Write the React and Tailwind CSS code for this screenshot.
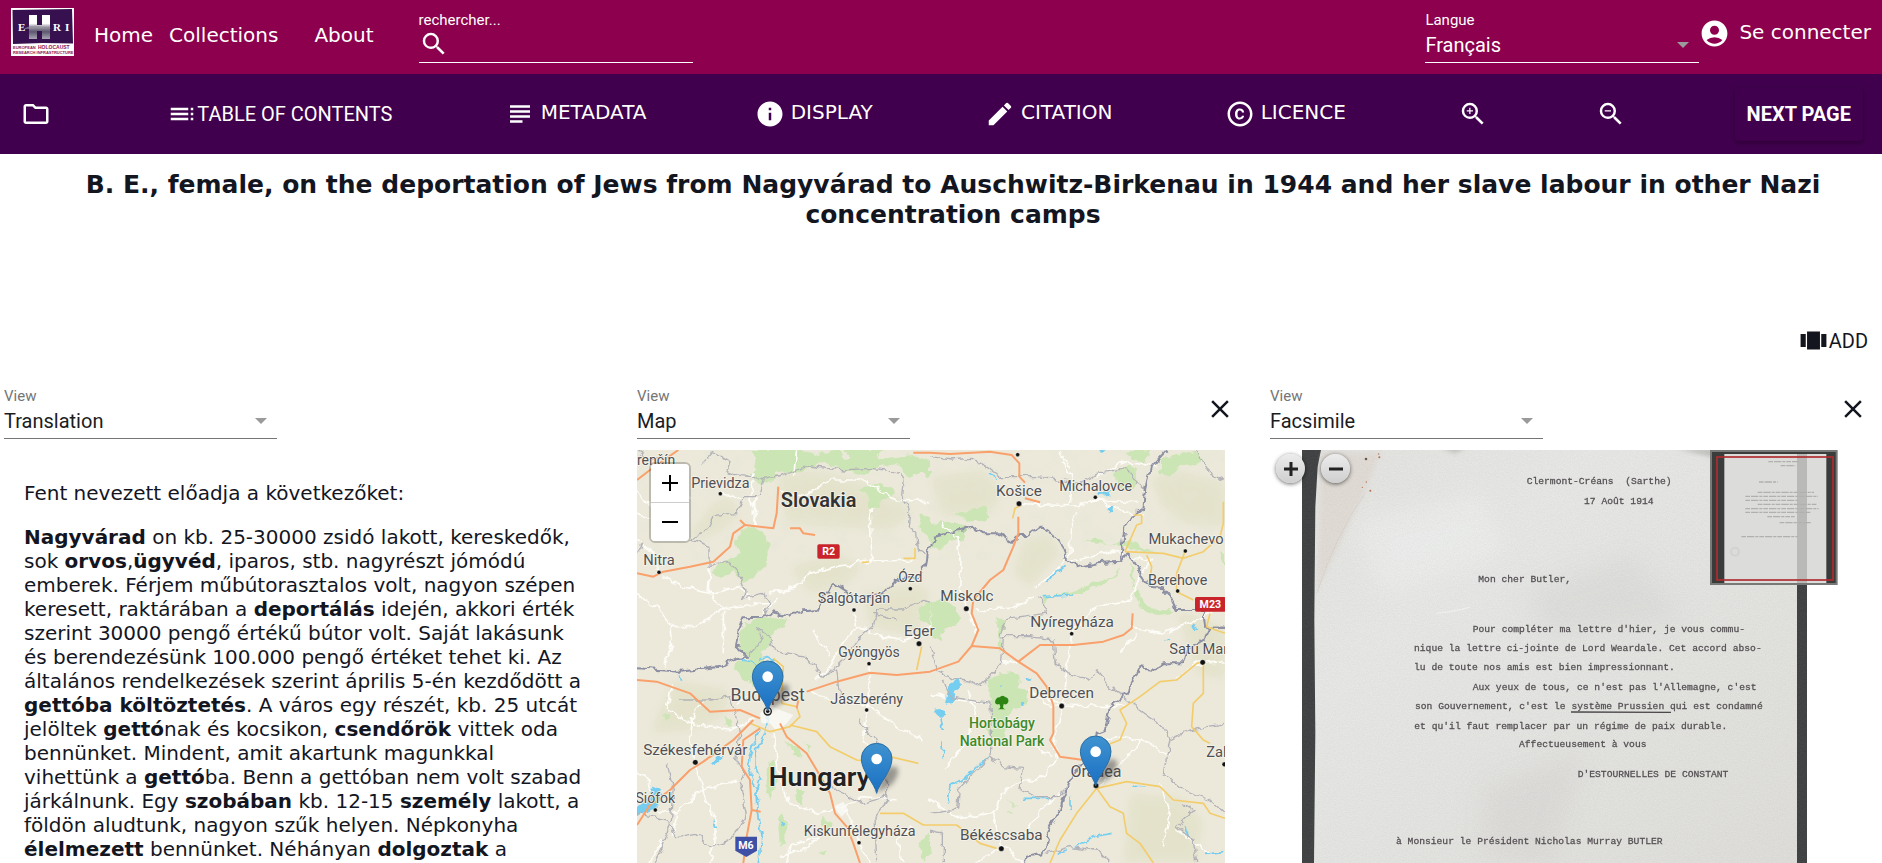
import React from "react";
import {
  MdAccountCircle,
  MdClose,
  MdCopyright,
  MdEdit,
  MdInfo,
  MdOutlineFolder,
  MdSearch,
  MdSubject,
  MdToc,
  MdViewCarousel,
  MdZoomIn,
  MdZoomOut,
} from "react-icons/md";

function Logo() {
  return (
    <svg viewBox="0 0 63 48" className="h-12 w-[63px]" role="img" aria-label="EHRI">
      <defs>
        <linearGradient id="hfade" x1="0" y1="0" x2="0" y2="1">
          <stop offset="0.35" stopColor="#fff" />
          <stop offset="0.5" stopColor="#9a96a4" />
          <stop offset="0.7" stopColor="#5d5870" />
          <stop offset="1" stopColor="#aaa6b4" />
        </linearGradient>
      </defs>
      <rect width="63" height="48" fill="#fff" />
      <path d="M1.500 2 L61 1 L62 35.500 L32 35 L2 36 Z" fill="#37104f" />
      <path d="M18 7 H26 V17 H31 V7 H39 V31 H31 V23 H26 V31 H18 Z" fill="url(#hfade)" />
      <path d="M14 20 Q22 16 31 19 T45 19 L45 20 L14 21 Z" fill="#9a96a4" opacity="0.6" />
      <g fill="#fff" fontFamily="'Liberation Serif', serif" fontSize="11" fontWeight="bold">
        <text x="7" y="23">E</text>
        <text x="42" y="23">R</text>
        <text x="54" y="23">I</text>
      </g>
      <g fill="#8e1450" fontFamily="'Liberation Sans', sans-serif" fontWeight="bold">
        <text x="2" y="41" fontSize="4">EUROPEAN</text>
        <text x="27" y="41" fontSize="5">HOLOCAUST</text>
        <text x="2" y="46" fontSize="4">RESEARCH INFRASTRUCTURE</text>
      </g>
    </svg>
  );
}

function Dropdown({ id, label, options, light }) {
  return (
    <div className={light ? "relative w-[274px] border-b border-white text-white" : "relative w-[273px] border-b border-[#757575] text-[#1c1c1f]"}>
      <label htmlFor={id} className={light ? "block text-[15px] leading-5" : "block text-[15px] leading-5 text-[#757575]"}>
        {label}
      </label>
      <select id={id} className="block h-8 w-full appearance-none bg-transparent pb-[3px] text-[20px] leading-6 outline-none">
        {options.map((o) => (
          <option key={o} className="text-black">{o}</option>
        ))}
      </select>
      <svg viewBox="0 0 12 6" className="pointer-events-none absolute right-2.5 bottom-3.5 h-1.5 w-3" aria-hidden="true">
        <path d="M0 0 H12 L6 6 Z" fill="#9a9a9a" />
      </svg>
    </div>
  );
}

function Header() {
  return (
    <header className="flex h-[74px] shrink-0 items-start bg-[#8c004d] pr-[11px] pl-[11px] text-[20px] leading-6 text-white">
      <a href="#ehri" className="mt-2 block"><Logo /></a>
      <nav className="mt-[23px] ml-5 flex">
        <a href="#home">Home</a>
        <a href="#collections" className="ml-4">Collections</a>
        <a href="#about" className="ml-9">About</a>
      </nav>
      <div className="mt-2.5 ml-[45px] w-[274px] border-b border-white font-[Roboto,sans-serif]">
        <label htmlFor="search" className="block text-[15px] leading-5">rechercher...</label>
        <div className="flex h-8 items-center pb-1">
          <MdSearch className="size-[30px] shrink-0" />
          <input id="search" type="text" className="min-w-0 flex-1 bg-transparent outline-none" />
        </div>
      </div>
      <div className="mt-2.5 ml-auto font-[Roboto,sans-serif]">
        <Dropdown id="lang" label="Langue" options={["Français", "English"]} light />
      </div>
      <a href="#login" className="mt-[18px] flex items-center">
        <MdAccountCircle className="size-[31px]" />
        <span className="-mt-1 ml-[9px]">Se connecter</span>
      </a>
    </header>
  );
}

function Toolbar() {
  return (
    <nav className="flex h-20 shrink-0 items-center justify-between bg-[#40004d] pr-[19px] pl-[21px] text-[20px] leading-6 text-white">
      <button aria-label="Folder" className="mr-2"><MdOutlineFolder className="size-[30px]" /></button>
      <button className="mr-1 flex items-center font-[Roboto,sans-serif]">
        <MdToc className="size-[30px]" />TABLE OF CONTENTS
      </button>
      <button className="flex items-center gap-1.5">
        <MdSubject className="size-[30px]" /><span className="-mt-1">METADATA</span>
      </button>
      <button className="flex items-center gap-1.5">
        <MdInfo className="size-[30px]" /><span className="-mt-1">DISPLAY</span>
      </button>
      <button className="mx-1 flex items-center gap-1.5">
        <MdEdit className="size-[30px]" /><span className="-mt-1">CITATION</span>
      </button>
      <button className="mr-1 flex items-center gap-1.5">
        <MdCopyright className="size-[30px]" /><span className="-mt-1">LICENCE</span>
      </button>
      <button aria-label="Zoom in"><MdZoomIn className="size-[30px]" /></button>
      <button aria-label="Zoom out"><MdZoomOut className="size-[30px]" /></button>
      <button className="h-[53px] rounded-sm px-3 font-[Roboto,sans-serif] font-bold shadow-[0_2px_4px_rgba(0,0,0,0.3)]">
        NEXT PAGE
      </button>
    </nav>
  );
}

function Panel({ id, view, closable, children }) {
  return (
    <section className="flex min-w-0 flex-1 flex-col">
      <div className="mb-[11px] flex items-start justify-between font-[Roboto,sans-serif]">
        <Dropdown id={id} label="View" options={[view, "Transcription", "Metadata"]} />
        {closable && (
          <button aria-label="Close" className="mt-2 -mr-2.5 text-[#13161f]">
            <MdClose className="size-[30px]" />
          </button>
        )}
      </div>
      <div className="min-h-0 flex-1 overflow-hidden">{children}</div>
    </section>
  );
}

function Translation() {
  return (
    <div className="space-y-5 pt-[31px] pl-5 text-[20px] leading-6">
      <p>Fent nevezett előadja a következőket:</p>
      <p>
        <b>Nagyvárad</b> on kb. 25-30000 zsidó lakott, kereskedők, sok <b>orvos</b>,<b>ügyvéd</b>, iparos, stb.
        nagyrészt jómódú emberek. Férjem műbútorasztalos volt, nagyon szépen keresett, raktárában a{" "}
        <b>deportálás</b> idején, akkori érték szerint 30000 pengő értékű bútor volt. Saját lakásunk és
        berendezésünk 100.000 pengő értéket tehet ki. Az általános rendelkezések szerint április 5-én
        kezdődött a <b>gettóba költöztetés</b>. A város egy részét, kb. 25 utcát jelöltek <b>gettó</b>nak és
        kocsikon, <b>csendőrök</b> vittek oda bennünket. Mindent, amit akartunk magunkkal vihettünk a{" "}
        <b>gettó</b>ba. Benn a gettóban nem volt szabad járkálnunk. Egy <b>szobában</b> kb. 12-15{" "}
        <b>személy</b> lakott, a földön aludtunk, nagyon szűk helyen. Népkonyha <b>élelmezett</b> bennünket.
        Néhányan <b>dolgoztak</b> a
      </p>
    </div>
  );
}

const forests = [
  "M365 210 L380 265 L365 285 L385 315 L430 300 L440 275 L500 280 L540 260 L580 245 L640 270 L700 285 L740 260 L800 250 L830 290 L870 275 L900 290 L900 240 L850 225 L760 235 L700 215 L650 240 L620 210 L560 225 L500 210 Z",
  "M640 210 L670 245 L740 230 L760 210 Z",
  "M684 330 L720 312 L770 318 L796 335 L740 380 L716 384 L712 350 Z",
  "M865 400 L900 410 L900 480 L875 455 Z",
  "M330 455 L368 440 L410 470 L418 500 L405 560 L360 600 L340 608 L310 575 L280 588 L245 580 L262 552 L300 535 L330 520 L315 490 Z",
  "M345 730 L380 715 L440 712 L470 720 L462 742 L430 750 L420 800 L395 815 L400 850 L372 920 L345 900 L315 865 L318 842 L360 838 L328 800 L330 765 Z",
  "M870 680 L900 665 L900 740 L865 715 Z",
  "M95 1005 L118 1002 L112 1018 Z M283 1010 L302 1020 L305 1045 L290 1035 Z",
  "M465 1080 L500 1100 L515 1130 L490 1125 Z M523 1090 L545 1100 L540 1118 Z",
  "M410 1150 L435 1145 L440 1200 L420 1260 L410 1220 Z",
  "M455 1300 L470 1320 L465 1390 L450 1400 L445 1340 Z M500 1225 L520 1235 L515 1270 L498 1260 Z M580 1310 L605 1330 L600 1355 L570 1330 Z",
  "M865 1400 L895 1350 L905 1420 L880 1440 Z M565 1425 L590 1400 L585 1420 Z",
  "M880 430 L960 425 L1005 440 L1005 490 L960 480 L930 510 L900 500 Z",
  "M975 400 L1040 390 L1070 383 L1075 420 L1010 425 Z",
  "M900 670 L940 655 L980 690 L985 730 L940 750 L935 785 L905 765 Z",
  "M1095 710 L1130 725 L1125 750 L1110 770 L1120 800 L1105 812 L1110 760 Z",
  "M1070 900 L1110 880 L1170 875 L1172 900 L1165 925 L1195 930 L1190 975 L1150 985 L1135 1010 L1125 1070 L1095 1080 L1080 1000 L1085 960 L1078 930 Z",
  "M1450 280 L1500 255 L1520 270 L1522 310 L1490 335 L1462 318 Z",
  "M1485 215 L1560 210 L1545 250 L1510 235 Z",
  "M1590 235 L1700 215 L1725 240 L1685 260 L1660 255 L1620 290 L1590 280 Z",
  "M1360 485 L1400 475 L1440 495 L1500 480 L1580 520 L1560 518 L1480 500 L1420 490 Z",
  "M1235 650 L1300 640 L1340 630 L1400 605 L1440 595 L1470 560 L1450 595 L1400 620 L1340 645 L1260 650 L1240 680 Z",
  "M1500 545 L1515 570 L1510 610 L1530 640 L1535 670 L1590 690 L1620 680 L1630 700 L1580 705 L1530 690 L1510 625 Z",
  "M1060 1040 L1100 1050 L1090 1070 Z M1130 1255 L1165 1285 L1150 1280 Z M1130 1290 L1150 1300 L1140 1305 Z",
  "M1775 510 L1785 520 L1785 560 L1772 540 Z",
];

const relief = [
  "M440 290 Q560 250 700 310 T800 340 L850 400 L780 450 L600 440 L470 430 Z",
  "M250 370 L300 350 L330 400 L280 450 L200 480 L180 460 Z",
  "M480 560 L620 520 L700 560 L640 620 L540 640 Z",
  "M900 290 L1060 270 L1120 330 L1080 400 L940 410 Z",
  "M1180 480 L1260 460 L1290 520 L1200 620 L1150 580 Z",
  "M1560 300 L1640 270 L1785 310 L1785 440 L1660 430 L1600 380 Z",
  "M700 640 L860 610 L900 640 L860 770 L720 740 Z",
  "M1500 1240 L1650 1250 L1720 1320 L1700 1449 L1480 1449 Z",
  "M1640 690 L1785 740 L1785 900 L1700 880 Z",
  "M130 900 L300 930 L280 1010 L180 1050 L60 1060 Z",
];

const whiteRoads = [
  "M21 640 L90 690 L120 740 L200 740 L270 690 L350 675 L420 670 L400 700 L440 660",
  "M100 590 L160 620 L240 640 L330 620 L360 660 M120 740 L125 800 L100 860",
  "M240 550 L235 630 L280 690 L280 820 M375 350 L372 430 M372 280 L360 360 L380 390 L375 430",
  "M720 384 L725 530 L720 545 M450 330 L520 350 L600 300 L700 300 L800 360 L900 365 M500 210 L490 290",
  "M420 640 L500 620 L540 580 L620 560 L700 545 L850 540 M672 700 L680 740 L640 790 L600 860 L560 900",
  "M680 740 L760 770 L830 780 L900 740 M717 855 L720 880 M550 750 L600 830",
  "M130 910 L110 980 L180 1030 L300 1050 L370 1020 M196 1150 L180 1080 L190 1000 L220 960",
  "M76 1290 L140 1300 L200 1240 L320 1200 M196 1150 L220 1240 L260 1330 L240 1449",
  "M430 1060 L440 1160 L480 1270 L560 1300 L640 1280 L700 1250 L800 1260 M640 1280 L670 1330 L687 1388 L720 1449",
  "M450 1430 L520 1410 L580 1360 M470 1449 L480 1400 L560 1370 M820 1449 L800 1380 L850 1340",
  "M540 930 L600 960 L720 980 L800 1040 L880 1080 M720 890 L710 990 L700 1080 L740 1130",
  "M935 430 L980 470 L990 540 L990 620 L1010 680 L1040 760 M1040 690 L1160 680 L1210 650",
  "M1168 370 L1260 375 L1340 378 L1400 360 L1520 365 M1340 400 L1325 440 L1320 520 L1280 570 L1220 620",
  "M1300 245 L1330 300 L1320 370 M1396 352 L1440 380 L1500 400 L1540 405 M1325 260 L1290 220 M1400 290 L1480 245 L1580 260",
  "M1570 530 L1530 590 L1500 660 L1400 680 L1325 760 M1325 540 L1440 515 L1560 540",
  "M1170 845 L1110 850 M1325 765 L1310 860 L1305 950 L1290 1010 L1270 1080 L1280 1140",
  "M1195 930 L1300 975 L1440 980 L1500 970 M1200 930 L1240 970 L1295 980",
  "M1500 740 L1600 760 L1720 710 L1760 690 M1470 820 L1520 760 M1640 900 L1690 850 L1800 845",
  "M1400 1080 L1480 1070 L1560 1090 L1620 1130 M1410 1215 L1500 1120 L1540 1080 M1280 1140 L1240 1190 L1130 1220 L1090 1300 L980 1310 L900 1260",
  "M1090 1300 L1110 1390 L1180 1449 M1114 1405 L1030 1449 M1320 1220 L1240 1280 L1180 1370 M940 1170 L1000 1100 L1040 1000 L1010 930",
  "M900 940 L980 960 L1080 970 M1180 1080 L1270 1130 M1590 1210 L1620 1300 L1600 1400 M1640 1350 L1740 1420",
  "M21 400 L80 420 L180 350 M271 341 L340 360 M60 380 L21 330 M21 480 L70 520 L87 575",
  "M21 1180 L60 1200 L76 1290 M100 1380 L60 1449 M140 1300 L130 1370 M320 970 L380 930 L400 850",
];

const borders = [
  "M21 865 L150 875 L270 860 L315 835 L350 830 L318 795 L325 750 L340 712 L400 710 L430 700 L480 710 L500 695 L560 690 L580 650 L615 612 L660 640 L700 650 L760 640 L800 600 L860 590 L885 560 L890 520 L915 470 L1030 440 L1060 460 L1110 460 L1148 485 L1170 465 L1195 465 L1232 440 L1290 480 L1310 530 L1340 562 L1400 550 L1470 545 L1475 500 L1485 430 L1540 385 L1545 330 L1560 265 L1610 210",
  "M1470 545 L1490 520 L1510 535 L1530 580 L1560 620 L1600 625 L1620 650 L1640 690 L1720 690 L1725 740 L1785 740",
  "M1785 740 L1740 740 L1720 780 L1670 810 L1660 850 L1600 850 L1570 870 L1530 865 L1490 940 L1440 980 L1425 1050 L1400 1060 L1395 1110 L1350 1160 L1315 1210 L1290 1290 L1250 1360 L1260 1380 L1240 1420 L1190 1430 L1185 1449",
];

const regions = [
  "M21 215 L60 240 L110 230 M220 250 L250 215 L300 245 L290 275 L330 290 L400 295 L460 285 L540 255 L640 270 L720 265 L770 270 L820 290 L815 350 L840 390 L835 440 L860 460 L865 510 L885 520",
  "M400 295 L385 350 L340 350 L320 400 L250 410 L230 450 L180 480 L240 500 L240 560 L290 540 L320 570 L345 630 L335 655 L400 640 L420 670 L400 710",
  "M900 230 L960 240 L1020 235 L1070 260 L1110 290 L1220 290 L1280 300 L1350 310 L1400 280 L1490 265 L1520 310 L1545 330",
  "M350 830 L400 780 L380 740 L420 770 L430 810 L530 830 L580 890 L620 870 L630 960",
  "M580 890 L640 840 L680 780 L730 740 L740 690 L820 690 L870 660 L900 670 M730 700 L800 720",
  "M900 800 L920 870 L970 895 L1010 900 L1050 915 L1080 890 L1115 850 L1120 770 L1200 770 L1270 780 L1275 850 L1310 880 L1380 900 L1400 870 L1440 920 L1470 940",
  "M940 900 L960 950 L1080 970 L1085 1080 L1080 1130 L1120 1160 L1180 1165 L1170 1230 L1220 1250 L1290 1250 L1315 1210",
  "M1080 1130 L1020 1190 L985 1230 L980 1290 L900 1300 M21 1300 L110 1320 L140 1370 L200 1360 L240 1400 L300 1380 L350 1310 L330 1210",
  "M150 960 L240 960 L300 950 L330 1050 L320 1140 L345 1180 L330 1220 M110 1150 L130 1230 L120 1330 L80 1449",
  "M680 1020 L740 1080 L770 1180 L770 1260 L735 1310 L740 1449 M560 1190 L620 1230 L700 1270 L770 1250",
  "M1470 940 L1530 990 L1600 1040 L1620 1080 L1680 1050 L1785 1030 M1620 1080 L1600 1180 L1660 1230 L1740 1260 L1785 1300",
  "M1250 1420 L1320 1400 L1400 1410 L1440 1449 M1660 1270 L1690 1290 L1640 1340 L1690 1380 L1700 1449 M1700 210 L1740 280 L1785 305",
  "M1225 650 L1250 700 L1130 715 L1115 770 M900 1350 L940 1360 L940 1449 M21 520 L40 490",
];

const yellowRoads = [
  "M480 1035 L560 1055 L600 1100 L680 1140 L770 1150 L780 1130 L865 1150",
  "M360 1030 L420 1055 L480 1040 L510 1010 L500 980 L455 970 L460 860 L430 835",
  "M750 1300 L820 1300 L880 1335 L980 1335 L1050 1390 L1100 1405",
  "M875 800 L860 870 M820 535 L855 535 L855 505 M695 547 L718 546",
  "M1148 415 L1155 385 L1175 375 M1485 515 L1520 435 L1535 430 L1535 405 L1510 405 M1485 515 L1600 520 L1660 535 L1720 515 L1770 470 L1780 430 L1780 365",
  "M1550 525 L1565 560 L1560 600 M1665 515 L1640 580 L1640 635 L1690 660 M1740 700 L1730 740 L1785 760",
  "M1720 845 L1700 850 L1640 900 L1590 905 L1530 950 L1470 990 L1490 1030 L1470 1080 L1430 1095",
  "M1720 845 L1720 940 L1690 970 L1685 1040 L1720 1080 L1740 1090",
  "M1400 1225 L1490 1205 L1590 1220 L1630 1260 L1720 1270 L1740 1300 L1785 1315",
  "M1400 1225 L1340 1300 L1290 1380 L1260 1449 M1400 1225 L1440 1280 L1480 1300 L1490 1360 L1530 1390 L1570 1449",
];

const orangeRoads = [
  "M21 580 L70 590 L100 575 L180 560 L250 545 L300 500 L310 460 L345 435 L430 445 L440 400 L445 320",
  "M345 435 L330 420 M480 445 L510 445 L520 460 L555 465 M21 300 L60 270 L145 210",
  "M21 900 L80 905 L180 940 L240 995 L330 990 L390 1015",
  "M370 1020 L310 1080 L220 1145 L180 1170 L120 1230 L60 1275 L21 1335",
  "M530 935 L620 905 L720 878 L800 885 L900 875 L985 845 L1025 798 L1110 805 L1165 845 L1220 880 L1250 920 L1270 975 L1270 1060 L1260 1080 L1290 1130 L1360 1140",
  "M500 985 L505 960 M450 1030 L470 1070 L530 1120 L560 1170 L600 1240 L615 1300 L650 1340 L670 1390 L690 1449",
  "M390 1045 L340 1080 L335 1160 L360 1200 L365 1290 L350 1370 L340 1449 M365 1290 L392 1295",
  "M1165 845 L1230 795 L1330 795 L1420 785 L1480 765 L1505 745 L1508 700",
  "M1025 798 L1045 750 L1025 700 L1030 660 L1080 600 L1120 570 L1150 500 L1165 460 L1165 410",
  "M900 218 L960 222 L1080 215 L1145 225 L1168 250 L1168 290 L1185 308 M850 218 L900 218 M1185 355 L1230 367",
];

const water = [
  "M21 1280 L60 1250 L70 1220 L110 1245 L75 1285 L21 1310 Z",
  "M945 970 L960 910 L985 895 L990 915 L965 970 L945 975 Z",
  "M915 990 L945 985 L945 1005 L925 1010 Z",
  "M1190 890 L1205 895 L1200 905 L1192 902 Z M1170 970 L1185 968 L1178 980 Z",
  "M240 1155 L260 1132 L282 1130 L262 1150 Z M250 1320 L265 1340 L255 1345 Z M148 885 L160 900 L152 903 Z",
  "M1435 385 L1450 378 L1448 395 L1438 398 Z M1400 340 L1450 330 L1440 345 L1405 348 Z M452 1320 L462 1330 L455 1340 Z",
  "M1109 915 L1120 912 L1115 922 Z M1410 210 L1425 215 L1418 222 Z",
];

const rivers = [
  "M415 1010 L405 1060 L380 1100 L378 1160 L395 1200 L378 1240 L382 1300 L395 1380 L385 1449",
  "M390 1050 L370 1090 L355 1160 L370 1210 L385 1230",
  "M320 830 L380 855 M388 835 L410 830 L430 845",
  "M1080 280 L1100 300 M1250 605 L1280 575 L1310 562 M1235 650 L1330 645",
  "M930 1000 L940 1050 M935 1080 L940 1140 M955 1265 L960 1215 L1000 1200 L1040 1160 L1080 1130",
  "M1185 1255 L1262 1255 M1320 1250 L1320 1290 M1280 1420 L1310 1410 M1330 1400 L1390 1370 L1450 1360",
  "M1510 1215 L1540 1218 M1660 1340 L1675 1370 M1725 1420 L1780 1412 M1610 780 L1620 785 M1690 730 L1700 750",
];

const cities = [
  [21, 255, "renčín", 42, "start"], [271, 323, "Prievidza", 43], [87, 556, "Nitra", 44], [841, 606, "Ózd", 42],
  [672, 670, "Salgótarján", 43], [868, 769, "Eger", 46], [717, 831, "Gyöngyös", 42], [413, 964, "Budapest", 53],
  [710, 971, "Jászberény", 43], [196, 1125, "Székesfehérvár", 46], [76, 1270, "Siófok", 42],
  [689, 1369, "Kiskunfélegyháza", 43], [1167, 347, "Košice", 46], [1397, 333, "Michalovce", 43],
  [1668, 491, "Mukachevo", 44], [1643, 614, "Berehove", 43], [1011, 664, "Miskolc", 46],
  [1326, 740, "Nyíregyháza", 46], [1618, 823, "Satu Mare", 44, "start"], [1295, 954, "Debrecen", 46],
  [1729, 1131, "Zalău", 44, "start"], [1398, 1190, "Oradea", 48], [1114, 1381, "Békéscsaba", 46],
];

const dots = [
  [271, 341, 6], [87, 577, 6], [841, 626, 6], [672, 690, 6], [867, 791, 8], [717, 851, 6], [710, 990, 6],
  [196, 1147, 8], [76, 1290, 6], [687, 1388, 6], [1163, 224, 6], [1167, 371, 8], [1396, 352, 6], [1666, 513, 6],
  [1643, 633, 6], [1009, 686, 8], [1325, 761, 6], [1718, 847, 8], [1295, 978, 8], [1783, 1153, 7], [1114, 1406, 8],
  [1398, 1217, 8],
];

const pins = [[413, 993], [740, 1240], [1397, 1218]];

function Lines({ items, stroke, width }) {
  return (
    <g fill="none" stroke={stroke} strokeWidth={width} strokeLinejoin="round">
      {items.map((d) => <path key={d} d={d} />)}
    </g>
  );
}

function MapView() {
  return (
    <div className="relative h-full bg-[#ebe9da]">
      <svg viewBox="21 210 1764 1239" preserveAspectRatio="xMinYMin slice" className="block h-full w-full" role="img" aria-label="Map">
        <defs>
          <linearGradient id="pin" x1="0" y1="0" x2="0" y2="1">
            <stop offset="0" stopColor="#3f93cf" />
            <stop offset="1" stopColor="#1a6fc4" />
          </linearGradient>
          <filter id="soft" x="-20%" y="-20%" width="140%" height="140%"><feGaussianBlur stdDeviation="14" /></filter>
          <filter id="shade" x="-50%" y="-50%" width="200%" height="200%"><feGaussianBlur stdDeviation="8" /></filter>
          <filter id="terrain" x="0" y="0" width="100%" height="100%">
            <feTurbulence type="fractalNoise" baseFrequency="0.02" numOctaves="3" seed="11" />
            <feColorMatrix values="0 0 0 0 0.78  0 0 0 0 0.79  0 0 0 0 0.66  1.600 0 0 0 -0.700" />
          </filter>
          <filter id="wobble" x="0" y="0" width="100%" height="100%">
            <feTurbulence type="fractalNoise" baseFrequency="0.04" numOctaves="2" seed="4" result="n" />
            <feDisplacementMap in="SourceGraphic" in2="n" scale="24" xChannelSelector="R" yChannelSelector="G" />
          </filter>
        </defs>
        <rect x="21" y="210" width="1764" height="1239" fill="#ece9db" />
        <g fill="#dfdfc2" opacity="0.6" filter="url(#soft)">{relief.map((d) => <path key={d} d={d} />)}</g>
        <rect x="21" y="210" width="1764" height="330" filter="url(#terrain)" opacity="0.7" />
        <g filter="url(#wobble)">
          <rect x="21" y="210" width="1764" height="1239" fill="none" />
          <g fill="#cce5b4">{forests.map((d) => <path key={d} d={d} />)}</g>
          <Lines items={whiteRoads} stroke="#fdfcf7" width="5" />
          <g fill="#75cdf0">{water.map((d) => <path key={d} d={d} />)}</g>
          <Lines items={rivers} stroke="#75cdf0" width="5" />
          <Lines items={regions} stroke="#b3b2b8" width="4" />
          <Lines items={borders} stroke="#8d8fa3" width="6" />
        </g>
        <path d="M390 1000 L420 975 L450 990 L490 1005 L470 1030 L440 1055 L420 1030 L395 1030 Z" fill="#fbfaf6" opacity="0.8" />
        <path d="M610 1280 L640 1265 L655 1290 L635 1310 Z" fill="#fbfaf6" opacity="0.8" />
        <Lines items={yellowRoads} stroke="#f3cd6c" width="5" />
        <Lines items={orangeRoads} stroke="#f9a06b" width="6" />
        <g fill="#111">
          {dots.map(([x, y, r]) => <circle key={x + "-" + y} cx={x} cy={y} r={r} stroke="#fff" strokeWidth="1" />)}
        </g>
        <circle cx="413" cy="994" r="11" fill="#ddd" stroke="#222" strokeWidth="4" />
        <circle cx="413" cy="994" r="5" fill="#111" />
        <g fontFamily="Roboto, sans-serif" fill="#505055" stroke="#f6f4ea" strokeWidth="5" strokeLinejoin="round" paintOrder="stroke">
          {cities.map(([x, y, t, s, a]) => (
            <text key={t} x={x} y={y} fontSize={s} textAnchor={a || "middle"}>{t}</text>
          ))}
          <text x="566" y="380" fontSize="60" fontWeight="600" fill="#333" textAnchor="middle">Slovakia</text>
          <text x="568" y="1218" fontSize="80" fontWeight="600" fill="#222" textAnchor="middle">Hungary</text>
          <g fill="#3c8a2c" fontWeight="500" fontSize="42" textAnchor="middle">
            <text x="1116" y="1043">Hortobágy</text>
            <text x="1116" y="1098">National Park</text>
          </g>
        </g>
        <path d="M1095 966 q2 -14 14 -14 q8 -10 18 0 q10 2 8 14 q-4 10 -14 6 l-2 10 q2 6 8 6 l-24 0 q8 -2 8 -8 l-3 -8 q-12 4 -13 -6 Z" fill="#2c8412" />
        <rect x="562" y="493" width="67" height="43" rx="5" fill="#c9242b" />
        <rect x="1695" y="651" width="92" height="44" rx="5" fill="#c9242b" />
        <path d="M316 1370 H381 V1412 L349 1431 L316 1412 Z" fill="#3f4fa5" />
        <g fill="#fff" fontFamily="Roboto, sans-serif" fontSize="32" fontWeight="700" textAnchor="middle">
          <text x="596" y="526">R2</text>
          <text x="1741" y="685">M23</text>
          <text x="348" y="1408">M6</text>
        </g>
        {pins.map(([x, y]) => (
          <g key={x} transform={`translate(${x} ${y})`}>
            <path d="M0 0 L20 -60 Q45 -92 62 -76 Q72 -58 44 -26 Z" fill="#333" opacity="0.45" filter="url(#shade)" />
            <path d="M0 0 C-6 -30 -46 -66 -46 -104 A46 46 0 0 1 46 -104 C46 -66 6 -30 0 0 Z" fill="url(#pin)" stroke="#2b6ea3" strokeWidth="3" />
            <circle cx="0" cy="-103" r="16" fill="#fff" />
          </g>
        ))}
      </svg>
      <div className="absolute top-3 left-3 flex w-[42px] flex-col rounded-md border-2 border-black/20 bg-clip-padding">
        <button aria-label="Zoom in map" className="flex h-[39px] items-center justify-center rounded-t border-b border-[#ccc] bg-white">
          <svg viewBox="0 0 16 16" className="size-4"><path d="M0 8 H16 M8 0 V16" stroke="#000" strokeWidth="2" /></svg>
        </button>
        <button aria-label="Zoom out map" className="flex h-[38px] items-center justify-center rounded-b bg-white">
          <svg viewBox="0 0 16 16" className="size-4"><path d="M0 8 H16" stroke="#000" strokeWidth="2" /></svg>
        </button>
      </div>
    </div>
  );
}

const letter = [
  [830, 493, "Clermont-Créans  (Sarthe)"],
  [1002, 553, "17 Août 1914"],
  [685, 786, "Mon cher Butler,"],
  [668, 935, "Pour compléter ma lettre d'hier, je vous commu-"],
  [492, 993, "nique la lettre ci-jointe de Lord Weardale. Cet accord abso-"],
  [492, 1051, "lu de toute nos amis est bien impressionnant."],
  [668, 1110, "Aux yeux de tous, ce n'est pas l'Allemagne, c'est"],
  [495, 1168, "son Gouvernement, c'est le système Prussien qui est condamné"],
  [493, 1226, "et qu'il faut remplacer par un régime de paix durable."],
  [807, 1282, "Affectueusement à vous"],
  [983, 1370, "D'ESTOURNELLES DE CONSTANT"],
  [438, 1572, "à Monsieur le Président Nicholas Murray BUTLER"],
];

function Facsimile() {
  return (
    <div className="relative h-full">
      <svg viewBox="60 390 1764 1239" preserveAspectRatio="xMinYMin slice" className="block h-full w-full" role="img" aria-label="Facsimile">
        <defs>
          <linearGradient id="paper" x1="0" y1="0" x2="1" y2="1">
            <stop offset="0" stopColor="#e4e3e0" />
            <stop offset="0.3" stopColor="#e8e9e7" />
            <stop offset="1" stopColor="#dfdeda" />
          </linearGradient>
          <filter id="grain" x="0" y="0" width="100%" height="100%">
            <feTurbulence type="fractalNoise" baseFrequency="0.25" numOctaves="2" seed="7" />
            <feColorMatrix values="0 0 0 0 0.3  0 0 0 0 0.3  0 0 0 0 0.3  0.500 0 0 0 -0.130" />
          </filter>
          <filter id="fold" x="-40%" y="-40%" width="180%" height="180%"><feGaussianBlur stdDeviation="36" /></filter>
          <filter id="crease" x="-40%" y="-40%" width="180%" height="180%"><feGaussianBlur stdDeviation="7" /></filter>
        </defs>
        <rect x="156" y="390" width="1515" height="1239" fill="#3e4041" />
        <path d="M213 390 L203 440 L196 560 L193 900 L196 1240 L192 1629 H1641 V390 Z" fill="url(#paper)" />
        <g filter="url(#fold)">
          <path d="M300 600 L700 520 L760 700 L400 830 Z" fill="#f0f1f0" opacity="0.6" />
          <path d="M820 820 L1150 700 L1300 900 L900 950 Z" fill="#d3d2cf" opacity="0.4" />
          <path d="M700 1400 L1000 1300 L900 1629 L700 1600 Z" fill="#d0cfcb" opacity="0.35" />
        </g>
        <g filter="url(#crease)">
          <path d="M216 400 L390 400 L340 520 L202 810 Z" fill="#e0dad2" opacity="0.8" />
          <path d="M570 380 L650 380 L615 400 Z M1280 385 L1400 385 L1390 412 Z" fill="#aaa9a5" opacity="0.6" />
        </g>
        <path d="M200 820 Q260 640 345 520" stroke="#d3cfc9" strokeWidth="2" fill="none" />
        <path d="M560 880 Q610 875 660 862" stroke="#f4f4f2" strokeWidth="3" fill="none" />
        <g fill="#b5704a">
          <circle cx="388" cy="412" r="3" /><circle cx="386" cy="402" r="2" /><circle cx="361" cy="512" r="3" />
          <circle cx="349" cy="486" r="2" /><circle cx="337" cy="502" r="2" /><circle cx="348" cy="417" r="4" fill="#6b5a50" />
        </g>
        <rect x="156" y="390" width="1515" height="1239" filter="url(#grain)" opacity="0.35" />
        <g fontFamily="'Liberation Mono', monospace" fontSize="29" fill="#544f52" stroke="#544f52" strokeWidth="0.800">
          {letter.map(([x, y, t]) => <text key={y} x={x} y={y} xmlSpace="preserve">{t}</text>)}
        </g>
        <path d="M963 1176 L1263 1177" stroke="#4b474a" strokeWidth="4" />

        <rect x="1383" y="393" width="377" height="399" fill="#3a3c3b" />
        <rect x="1423" y="402" width="306" height="388" fill="#dcdcda" />
        <rect x="1641" y="402" width="30" height="388" fill="#b9bab8" />
        <g stroke="#b0b0ae" strokeWidth="4" strokeDasharray="14 3 22 3 9 3">
          <path d="M1555 425 H1647 M1592 437 H1636 M1527 486 H1583 M1523 517 H1692 M1486 529 H1704 M1486 541 H1646 M1523 553 H1702 M1486 566 H1706 M1486 577 H1681 M1552 590 H1634 M1589 608 H1683 M1474 650 H1644" />
        </g>
        <circle cx="1455" cy="695" r="12" fill="none" stroke="#d2d2d1" strokeWidth="6" />
        <rect x="1383" y="393" width="377" height="399" fill="none" stroke="#777977" strokeWidth="6" />
        <rect x="1401" y="411" width="348" height="369" fill="none" stroke="#b02c2f" strokeWidth="5" />
      </svg>
      <div className="absolute top-1 left-1.5 flex gap-4">
        {["+", "−"].map((s) => (
          <button
            key={s}
            aria-label={s === "+" ? "Zoom in facsimile" : "Zoom out facsimile"}
            className="flex size-[29px] items-center justify-center rounded-full bg-linear-to-b from-[#ececec] to-[#cfcfcf] shadow-[0_1px_4px_rgba(0,0,0,0.6)]"
          >
            <svg viewBox="0 0 16 16" className="size-4">
              <path d={s === "+" ? "M1 8 H15 M8 1 V15" : "M1 8 H15"} stroke="#222" strokeWidth="3" />
            </svg>
          </button>
        ))}
      </div>
    </div>
  );
}

export default function App() {
  return (
    <div className="flex h-screen flex-col overflow-hidden bg-white font-['DejaVu_Sans',Verdana,sans-serif] text-[#13161f]">
      <Header />
      <Toolbar />
      <h1 className="mt-4 mr-6 ml-12 text-center text-[25px] leading-[30px] font-bold">
        B. E., female, on the deportation of Jews from Nagyvárad to Auschwitz-Birkenau in 1944 and her slave labour in
        other Nazi concentration camps
      </h1>
      <div className="mt-[95px] flex justify-end pr-3.5">
        <button className="flex items-center font-[Roboto,sans-serif] text-[20px] leading-6">
          <MdViewCarousel className="size-[31px]" />ADD
        </button>
      </div>
      <main className="mt-[30px] flex min-h-0 flex-1 gap-[45px] pr-6 pl-1">
        <Panel id="view-1" view="Translation"><Translation /></Panel>
        <Panel id="view-2" view="Map" closable><MapView /></Panel>
        <Panel id="view-3" view="Facsimile" closable><Facsimile /></Panel>
      </main>
    </div>
  );
}
